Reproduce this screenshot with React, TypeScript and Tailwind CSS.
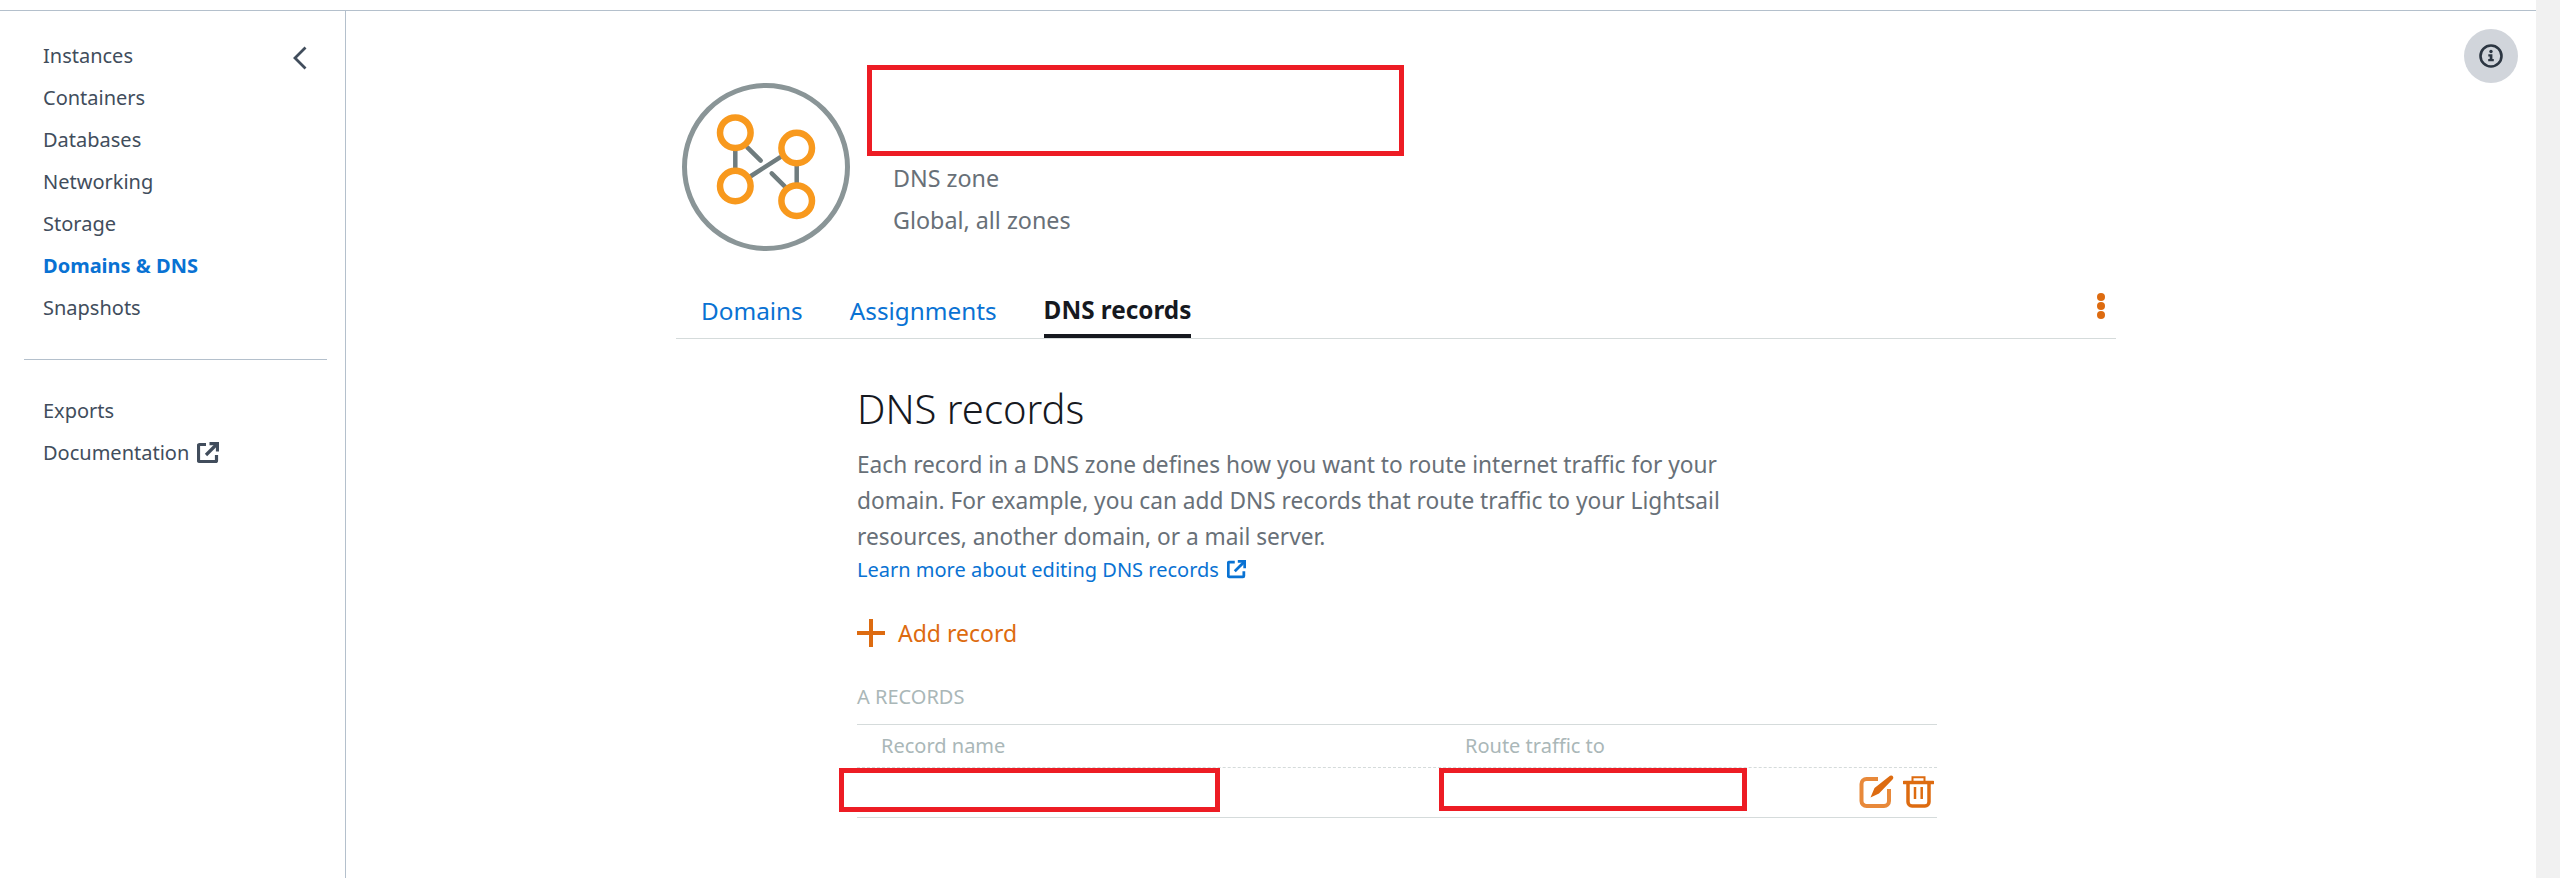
const FONT = "font-['Noto_Sans','Open_Sans',sans-serif]";

function ExternalIcon({ className }: { className: string }) {
  return (
    <svg viewBox="0 0 22 22" className={className} fill="none" stroke="currentColor">
      <path d="M9 2.5H2.5a1 1 0 0 0-1 1v15a1 1 0 0 0 1 1h16a1 1 0 0 0 1-1V13" strokeWidth="3.2" />
      <path d="M12.5 1.6h8V9.5" strokeWidth="3.2" />
      <path d="M19.5 2.5L9 13" strokeWidth="3.2" />
    </svg>
  );
}

function Logo() {
  return (
    <svg viewBox="0 0 170 170" className="h-[170px] w-[170px] shrink-0" fill="none">
      <circle cx="85" cy="84" r="81.5" stroke="#8a9597" strokeWidth="5" />
      <g stroke="#6f7c7e" strokeWidth="4.5" strokeLinecap="round">
        <path d="M54.3 50V103" />
        <path d="M115.7 65V118" />
        <path d="M70 93L99 74.3" />
        <path d="M66.3 64.3L79.7 77.7" />
        <path d="M90.7 90.3L104 103.7" />
      </g>
      <g stroke="#f8991d" strokeWidth="6.5" fill="#fff">
        <circle cx="54.3" cy="49.7" r="15.3" />
        <circle cx="115.7" cy="65" r="15.3" />
        <circle cx="54.3" cy="103" r="15.3" />
        <circle cx="115.7" cy="117.7" r="15.3" />
      </g>
    </svg>
  );
}

function EditIcon() {
  return (
    <svg viewBox="8 11 36 36" className="h-[36px] w-[36px]" fill="none">
      <path d="M28 15H16.5a5 5 0 0 0-5 5V37a5 5 0 0 0 5 5H34a5 5 0 0 0 5-5V25" stroke="#e8893a" strokeWidth="4" />
      <path d="M20.5 33.5L24.5 24L40 11.8Q42 11 43 12.5T42.5 15.5L29 29.5Z" fill="#dd6b10" />
    </svg>
  );
}

function TrashIcon() {
  return (
    <svg viewBox="53 11 31 33" className="h-[33px] w-[31px]" fill="none" stroke="#dd6b10">
      <path d="M54 18.5H83" strokeWidth="3.5" strokeLinecap="round" />
      <path d="M62.5 17V13.2h12V17" strokeWidth="2" />
      <path d="M58 20V38a4 4 0 0 0 4 4H75a4 4 0 0 0 4-4V20" strokeWidth="3.5" />
      <path d="M65 23V35M71.7 23V35" strokeWidth="2.5" />
    </svg>
  );
}

function InfoIcon() {
  return (
    <svg viewBox="0 0 24 24" className="h-6 w-6" fill="none">
      <circle cx="12" cy="12" r="10.5" stroke="#2c3642" strokeWidth="2.6" />
      <circle cx="12" cy="7.5" r="1.7" fill="#2c3642" />
      <path d="M9.3 10.3H13.4V15H14.8V17.2H9.2V15H10.7V12.4H9.3Z" fill="#2c3642" />
    </svg>
  );
}

const NAV_TOP = ["Instances", "Containers", "Databases", "Networking", "Storage", "Domains & DNS", "Snapshots"];

export default function App() {
  return (
    <div className={`${FONT} flex h-[878px] w-[2560px] overflow-hidden bg-white`}>
      <div className="flex w-[2536px] flex-col">
        <div className="h-[11px] shrink-0 border-b border-[#b4c0cc]" />
        <div className="flex min-h-0 flex-1">
          <aside className="w-[346px] shrink-0 border-r border-[#b4c0cc] pt-[24px]">
            <div className="relative">
              <ul className="pl-[43px] text-[20px] text-[#414d5c]">
                {NAV_TOP.map((n) => (
                  <li key={n} className={`flex h-[42px] items-center ${n === "Domains & DNS" ? "font-bold text-[#0972d3]" : ""}`}>
                    {n}
                  </li>
                ))}
              </ul>
              <svg viewBox="0 0 14 24" className="absolute left-[293px] top-[11px] h-[24px] w-[14px]" fill="none" stroke="#414d5c" strokeWidth="2.8">
                <path d="M12.5 1.5L2 12l10.5 10.5" />
              </svg>
            </div>
            <div className="ml-[24px] mt-[30px] h-px w-[303px] bg-[#b4c0cc]" />
            <ul className="mt-[30px] pl-[43px] text-[20px] text-[#414d5c]">
              <li className="flex h-[42px] items-center">Exports</li>
              <li className="flex h-[42px] items-center gap-2">
                Documentation
                <ExternalIcon className="h-[22px] w-[22px] text-[#414d5c]" />
              </li>
            </ul>
          </aside>

          <main className="relative min-w-0 flex-1 pl-[330px]">
            <button className="absolute left-[2118px] top-[18px] flex h-[54px] w-[54px] items-center justify-center rounded-full bg-[#d1d5db]">
              <InfoIcon />
            </button>
            <div className="w-[1440px]">
              <div className="flex items-start pl-[5px] pt-[72px]">
                <Logo />
                <div className="ml-[16px] -mt-[18px]">
                  <div className="h-[91px] w-[537px] border-[5px] border-[#ed1c24]" />
                  <p className="ml-[26px] mt-[1px] flex h-[42px] items-center text-[23.3px] text-[#687078]">DNS zone</p>
                  <p className="ml-[26px] flex h-[42px] items-center text-[23.3px] text-[#687078]">Global, all zones</p>
                </div>
              </div>
              <div className="mt-[31px] flex h-[55px] items-stretch justify-between border-b border-[#d5dbdb] pl-[25px]">
                <div className="flex gap-[47px] text-[24.3px]">
                  <span className="flex items-center text-[#0972d3]">Domains</span>
                  <span className="flex items-center text-[#0972d3]">Assignments</span>
                  <span className="flex items-center border-b-4 border-[#16191f] pt-[2px] font-bold text-[#16191f]">DNS records</span>
                </div>
                <div className="mr-[11px] flex flex-col items-center justify-center gap-px pb-[10px]">
                  <span className="h-2 w-2 rounded-full bg-[#dd6b10]" />
                  <span className="h-2 w-2 rounded-full bg-[#dd6b10]" />
                  <span className="h-2 w-2 rounded-full bg-[#dd6b10]" />
                </div>
              </div>

              <div className="ml-[181px] w-[1080px] pt-[45px]">
                <h1 className="flex h-[50px] items-center text-[40px] font-light text-[#16191f]">DNS records</h1>
                <p className="mt-[13px] w-[920px] text-[22.7px] leading-[36px] text-[#687078]">
                  Each record in a DNS zone defines how you want to route internet traffic for your domain. For example, you can add DNS records that route traffic to your Lightsail resources, another domain, or a mail server.
                </p>
                <a className="flex h-[29px] items-center gap-2 text-[20px] text-[#0972d3]">
                  Learn more about editing DNS records
                  <ExternalIcon className="h-[19px] w-[19px] text-[#0972d3]" />
                </a>
                <div className="mt-[29px] flex h-[40px] items-center gap-[13px] text-[23px] text-[#dd6b10]">
                  <svg viewBox="0 0 28 28" className="h-[28px] w-[28px]" fill="none" stroke="#dd6b10" strokeWidth="4">
                    <path d="M14 0V28M0 14H28" />
                  </svg>
                  Add record
                </div>
                <div className="mt-[29px] flex h-[30px] items-center text-[20px] text-[#aab7b8]">A RECORDS</div>
                <div className="mt-[12px] border-y border-[#d5dbdb]">
                  <div className="flex h-[43px] items-center border-b border-dashed border-[#d5dbdb] text-[20px] text-[#aab7b8]">
                    <span className="ml-[24px] w-[584px]">Record name</span>
                    <span>Route traffic to</span>
                  </div>
                  <div className="flex h-[49px] items-start">
                    <div className="-ml-[18px] h-[44px] w-[381px] border-[5px] border-[#ed1c24]" />
                    <div className="ml-[219px] h-[43px] w-[308px] border-[5px] border-[#ed1c24]" />
                    <div className="ml-[111px] mt-[7px] flex gap-[9px]">
                      <EditIcon />
                      <TrashIcon />
                    </div>
                  </div>
                </div>
              </div>
            </div>
          </main>
        </div>
      </div>
      <div className="w-[24px] shrink-0 bg-[#f1f1f1]" />
    </div>
  );
}
